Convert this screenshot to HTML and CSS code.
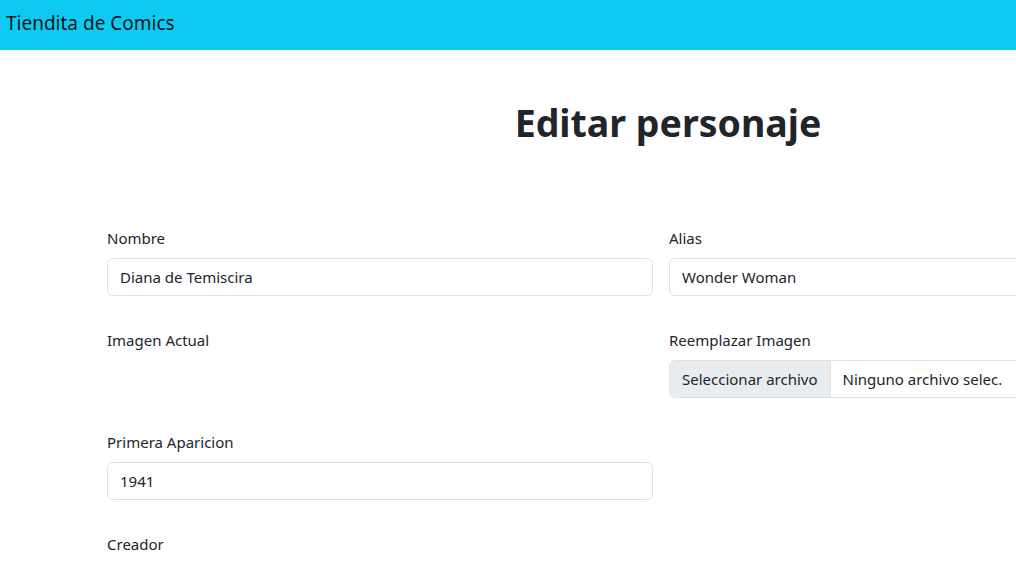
FILE: index.html
```html
<!DOCTYPE html>
<html lang="es">
<head>
<meta charset="utf-8">
<title>Editar personaje</title>
<link rel="stylesheet" href="styles.css">
</head>
<body>
<div class="page">
  <nav class="navbar">
    <span class="brand">Tiendita de Comics</span>
  </nav>
  <h1 class="title">Editar personaje</h1>
  <form class="form">
    <div class="field">
      <label class="label">Nombre</label>
      <div class="input">Diana de Temiscira</div>
    </div>
    <div class="field">
      <label class="label">Alias</label>
      <div class="input">Wonder Woman</div>
    </div>
    <div class="field">
      <label class="label">Imagen Actual</label>
    </div>
    <div class="field">
      <label class="label">Reemplazar Imagen</label>
      <div class="input file">
        <span class="file-btn">Seleccionar archivo</span>
        <span class="file-name">Ninguno archivo selec.</span>
      </div>
    </div>
    <div class="field">
      <label class="label">Primera Aparicion</label>
      <div class="input">1941</div>
    </div>
    <div class="field"></div>
    <div class="field">
      <label class="label">Creador</label>
      <div class="input"></div>
    </div>
  </form>
</div>
</body>
</html>
```
FILE: styles.css
```css
html, body {
  margin: 0;
  padding: 0;
  overflow: hidden;
  background: #fff;
}
body {
  font-family: "Noto Sans", "Open Sans", sans-serif;
  font-size: 15px;
  line-height: 24px;
  color: #212529;
}
.page {
  width: 1336px;
}
.navbar {
  background: #0dcaf0;
  height: 50px;
  display: flex;
  align-items: center;
  padding: 0 6px;
  box-sizing: border-box;
}
.brand {
  font-size: 19px;
  line-height: 30px;
  color: rgba(0, 0, 0, 0.9);
  margin-top: -4px;
}
.title {
  margin: 49px 0 0;
  font-size: 37.5px;
  line-height: 48px;
  font-weight: 700;
  text-align: center;
}
.form {
  margin: 79px 0 0 107px;
  width: 1108px;
  display: grid;
  grid-template-columns: 546px 546px;
  column-gap: 16px;
}
.field {
  padding-bottom: 32px;
}
.label {
  display: block;
  margin-bottom: 8px;
}
.input {
  height: 38px;
  box-sizing: border-box;
  border: 1px solid #dee2e6;
  border-radius: 6px;
  padding: 6px 12px;
  display: flex;
  align-items: center;
}
.input.file {
  padding: 0;
  overflow: hidden;
}
.file-btn {
  background: #e9ecef;
  height: 100%;
  display: flex;
  align-items: center;
  padding: 0 12px;
  border-right: 1px solid #dee2e6;
}
.file-name {
  padding: 0 12px;
  white-space: nowrap;
}
```
